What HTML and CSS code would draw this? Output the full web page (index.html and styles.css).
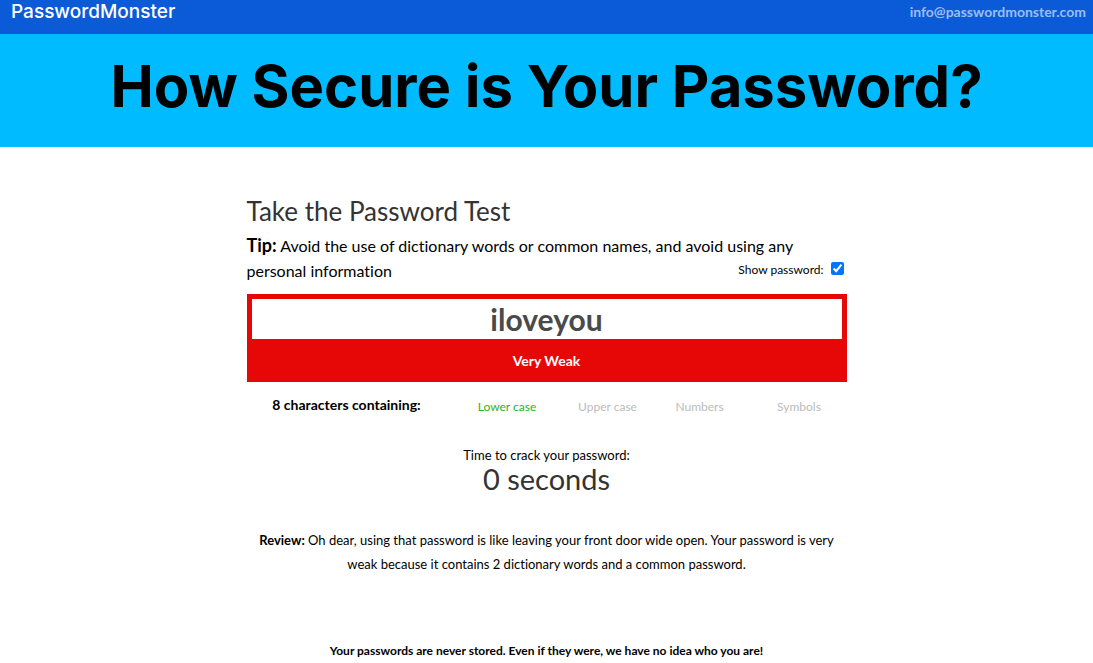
FILE: index.html
```html
<!DOCTYPE html>
<html lang="en">
<head>
<meta charset="utf-8">
<title>PasswordMonster</title>
<link rel="stylesheet" href="styles.css">
</head>
<body>
<header class="topbar">
  <a class="brand" href="#">PasswordMonster</a>
  <a class="contact" href="mailto:info@passwordmonster.com">info@passwordmonster.com</a>
</header>
<div class="hero"><h1>How Secure is Your Password?</h1></div>
<main class="test">
  <h2>Take the Password Test</h2>
  <div class="tip">
    <strong>Tip:</strong> Avoid the use of dictionary words or common names, and avoid using any personal information
    <label class="show">Show password: <input type="checkbox" checked></label>
  </div>
  <div class="meter">
    <input class="password" type="text" value="iloveyou" aria-label="Password">
    <div class="strength">Very Weak</div>
  </div>
  <div class="makeup">
    <strong>8 characters containing:</strong>
    <span class="on">Lower case</span>
    <span>Upper case</span>
    <span>Numbers</span>
    <span>Symbols</span>
  </div>
  <div class="crack">
    <p>Time to crack your password:</p>
    <p class="time">0 seconds</p>
  </div>
  <p class="review"><strong>Review:</strong> Oh dear, using that password is like leaving your front door wide open. Your password is very weak because it contains 2 dictionary words and a common password.</p>
  <p class="privacy">Your passwords are never stored. Even if they were, we have no idea who you are!</p>
</main>
</body>
</html>
```
FILE: styles.css
```css
* { box-sizing: border-box; }
body { margin: 0; background: #fff; color: #000; font-family: Lato, sans-serif; font-size: 13px; font-variant-ligatures: none; }
h1, h2, p { margin: 0; }
.topbar { display: flex; justify-content: space-between; padding: 0 7px 10px 11px; background: #0b5bd8; line-height: 24px; }
.brand { color: #fff; font: 500 19px/24px Inter, sans-serif; text-decoration: none; }
.contact { color: #9dbdef; font-size: 14px; font-weight: 700; text-decoration: none; }
.hero { padding: 12px 0 21px; background: #00bbff; text-align: center; }
.hero h1 { font: 700 58px/80px Inter, sans-serif; }
.test { max-width: 600px; margin: 0 auto; padding-top: 47px; }
.test h2 { color: #333; font-weight: 400; font-size: 26px; line-height: 34px; }
.tip { padding-top: 5px; font-size: 16px; line-height: 25px; }
.tip strong { font-size: 18px; }
.show { float: right; display: flex; align-items: center; gap: 7px; padding-right: 3px; font-size: 12px; line-height: 24px; }
.show input { width: 13px; height: 13px; margin: 0 0 4px; }
.meter { margin-top: 11px; border: 5px solid #e60707; background: #e60707; }
.password { display: block; width: 100%; height: 40px; padding: 0; border: 0; background: #fff; color: #4a4a4a; font: 700 30px/40px Lato, sans-serif; text-align: center; }
.strength { padding-top: 6px; color: #fff; font-weight: 700; font-size: 14px; line-height: 32px; text-align: center; }
.makeup { display: grid; grid-template-columns: 200px 121px 80px 104px 1fr; line-height: 24px; margin-top: 11px; text-align: center; font-size: 12px; color: #bbb; }
.makeup strong { color: #000; font-size: 14px; }
.makeup span { padding-top: 2px; }
.makeup .on { color: #28b428; }
.crack { margin-top: 26px; text-align: center; line-height: 20px; }
.time { color: #333; font-size: 29px; line-height: 28px; }
.review { margin-top: 35px; line-height: 24px; text-align: center; }
.privacy { margin-top: 65px; font-size: 12px; font-weight: 700; line-height: 20px; text-align: center; }
```
